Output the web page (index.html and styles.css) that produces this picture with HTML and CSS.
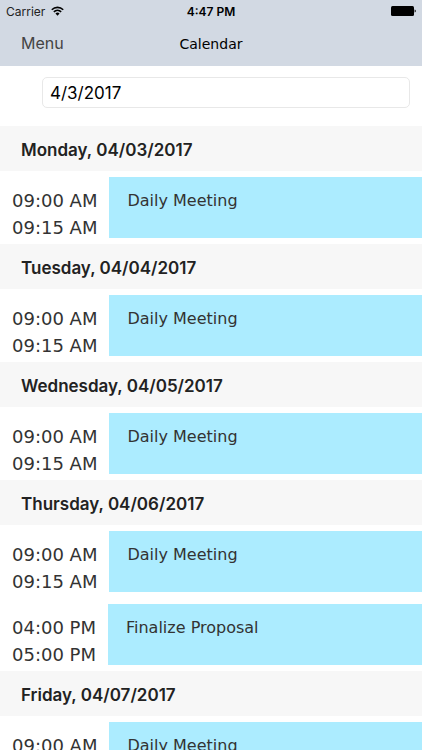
FILE: index.html
```html
<!DOCTYPE html>
<html lang="en">
<head>
<meta charset="utf-8">
<meta name="viewport" content="width=device-width, initial-scale=1">
<title>Calendar</title>
<link rel="stylesheet" href="styles.css">
</head>
<body>
<div class="app">
  <header class="top">
    <div class="status">
      <div class="carrier">
        <span>Carrier</span>
        <svg class="wifi" viewBox="0 0 12 9" aria-hidden="true">
          <path d="M0.7 3.3a7.6 7.6 0 0 1 10.6 0" fill="none" stroke="#000" stroke-width="1.4"/>
          <path d="M2.6 5.3a4.9 4.9 0 0 1 6.8 0" fill="none" stroke="#000" stroke-width="1.4"/>
          <path d="M4.1 6.8a2.8 2.8 0 0 1 3.8 0L6 8.8z" fill="#000"/>
        </svg>
      </div>
      <span class="clock">4:47 PM</span>
      <svg class="battery" viewBox="0 0 25 10" aria-hidden="true">
        <rect width="23" height="10" rx="1.5" fill="#000"/>
        <path d="M23.6 3.4q1.2 .3 1.2 1.6t-1.2 1.6z" fill="#000"/>
      </svg>
    </div>
    <nav class="bar">
      <button class="menu" type="button">Menu</button>
      <h1 class="title">Calendar</h1>
    </nav>
  </header>
  <main class="content">
    <div class="picker">
      <input class="date" type="text" value="4/3/2017" aria-label="Date">
    </div>
    <section>
      <h2 class="day">Monday, 04/03/2017</h2>
      <div class="row">
        <div class="times"><time>09:00 AM</time><time>09:15 AM</time></div>
        <div class="event">Daily Meeting</div>
      </div>
    </section>
    <section>
      <h2 class="day">Tuesday, 04/04/2017</h2>
      <div class="row">
        <div class="times"><time>09:00 AM</time><time>09:15 AM</time></div>
        <div class="event">Daily Meeting</div>
      </div>
    </section>
    <section>
      <h2 class="day">Wednesday, 04/05/2017</h2>
      <div class="row">
        <div class="times"><time>09:00 AM</time><time>09:15 AM</time></div>
        <div class="event">Daily Meeting</div>
      </div>
    </section>
    <section>
      <h2 class="day">Thursday, 04/06/2017</h2>
      <div class="row">
        <div class="times"><time>09:00 AM</time><time>09:15 AM</time></div>
        <div class="event">Daily Meeting</div>
      </div>
      <div class="row">
        <div class="times"><time>04:00 PM</time><time>05:00 PM</time></div>
        <div class="event">Finalize Proposal</div>
      </div>
    </section>
    <section>
      <h2 class="day">Friday, 04/07/2017</h2>
      <div class="row">
        <div class="times"><time>09:00 AM</time><time>09:15 AM</time></div>
        <div class="event">Daily Meeting</div>
      </div>
    </section>
  </main>
</div>
</body>
</html>
```
FILE: styles.css
```css
* {
  box-sizing: border-box;
}

body {
  margin: 0;
  background: #fff;
  color: #333;
  font-family: Inter, sans-serif;
}

.app {
  display: flex;
  flex-direction: column;
  height: 100vh;
}

.top {
  flex: none;
  background: #d2d9e3;
  color: #000;
}

.status {
  display: grid;
  grid-template-columns: 1fr auto 1fr;
  align-items: center;
  height: 22px;
  padding: 0 6px;
  font-size: 12px;
}

.carrier {
  display: flex;
  align-items: center;
  gap: 6px;
  color: #222;
}

.wifi {
  width: 13px;
  height: 10px;
}

.clock {
  font-weight: 600;
}

.battery {
  justify-self: end;
  width: 25px;
  height: 10px;
}

.bar {
  display: grid;
  grid-template-columns: 1fr auto 1fr;
  align-items: center;
  height: 44px;
  padding: 0 21px;
}

.menu {
  justify-self: start;
  padding: 0 0 2px;
  border: 0;
  background: none;
  color: #444;
  font: 16px/24px Inter, sans-serif;
}

.title {
  margin: 0;
  font: 14px/20px "DejaVu Sans", sans-serif;
}

.content {
  flex: 1;
  min-height: 0;
  overflow-y: auto;
  scrollbar-width: none;
}

.picker {
  display: flex;
  height: 60px;
  padding: 11px 12px 18px 42px;
}

.date {
  flex: 1;
  min-width: 0;
  padding: 0 7px;
  border: 1px solid #e8e8e8;
  border-radius: 5px;
  background: #fff;
  color: #000;
  font: 17px/24px Inter, sans-serif;
}

.day {
  margin: 0;
  padding: 3px 21px 0;
  background: #f7f7f7;
  color: #222;
  font-size: 17px;
  font-weight: 600;
  line-height: 42px;
}

.row {
  display: flex;
  align-items: flex-start;
  height: 73px;
  padding: 6px 0;
  font: 16px/27px "DejaVu Sans", sans-serif;
}

.times {
  flex: none;
  padding: 10px 12px 0;
  font-size: 18px;
}

.times time {
  display: block;
}

.event {
  flex: 1;
  height: 61px;
  padding: 10px 18px;
  background: #acecff;
}
```
